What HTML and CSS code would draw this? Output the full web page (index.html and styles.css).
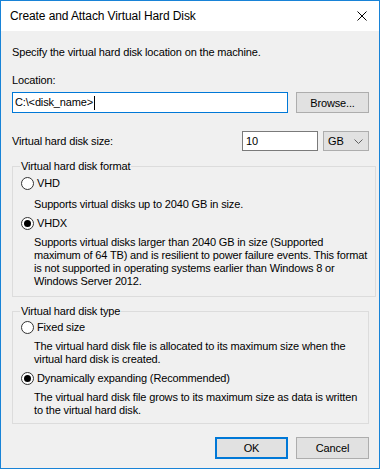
FILE: index.html
```html
<html>

<head>
  <title>Create and Attach Virtual Hard Disk</title>
  <link rel="stylesheet" href="styles.css">
</head>

<body>
  <div class="window">
    <div class="titlebar">
      <span class="title">Create and Attach Virtual Hard Disk</span>
      <svg class="close" width="10" height="10" viewBox="0 0 10 10">
        <path d="M0.5 0.5 L9.5 9.5 M9.5 0.5 L0.5 9.5" stroke="#000" stroke-width="1" fill="none" />
      </svg>
    </div>

    <div class="content">
      <p class="intro">Specify the virtual hard disk location on the machine.</p>

      <p class="field-label">Location:</p>
      <div class="location-row">
        <div class="textbox textbox-focus">C:\&lt;disk_name&gt;<span class="caret"></span></div>
        <div class="button browse">Browse...</div>
      </div>

      <div class="size-row">
        <span class="size-label">Virtual hard disk size:</span>
        <div class="textbox size-box">10</div>
        <div class="select">
          <span>GB</span>
          <svg width="9" height="5" viewBox="0 0 9 5">
            <path d="M0.5 0.5 L4.5 4.5 L8.5 0.5" stroke="#606060" stroke-width="1" fill="none" />
          </svg>
        </div>
      </div>

      <fieldset class="group group-format">
        <legend>Virtual hard disk format</legend>
        <div class="radio first">
          <span class="dot"></span>VHD
        </div>
        <p class="desc one">Supports virtual disks up to 2040 GB in size.</p>
        <div class="radio">
          <span class="dot checked"></span>VHDX
        </div>
        <p class="desc">Supports virtual disks larger than 2040 GB in size (Supported<br>
          maximum of 64 TB) and is resilient to power failure events. This format<br>
          is not supported in operating systems earlier than Windows 8 or<br>
          Windows Server 2012.</p>
      </fieldset>

      <fieldset class="group group-type">
        <legend>Virtual hard disk type</legend>
        <div class="radio first">
          <span class="dot"></span>Fixed size
        </div>
        <p class="desc">The virtual hard disk file is allocated to its maximum size when the<br>
          virtual hard disk is created.</p>
        <div class="radio">
          <span class="dot checked"></span>Dynamically expanding (Recommended)
        </div>
        <p class="desc">The virtual hard disk file grows to its maximum size as data is written<br>
          to the virtual hard disk.</p>
      </fieldset>

      <div class="actions">
        <div class="button default">OK</div>
        <div class="button">Cancel</div>
      </div>
    </div>
  </div>
</body>

</html>
```

FILE: styles.css
```css
body {
  margin: 0;
  font-family: 'Liberation Sans', Arial, sans-serif;
  font-size: 11px;
  letter-spacing: -0.15px;
  color: #000;
}

p {
  margin: 0;
}

.window {
  width: 380px;
  height: 469px;
  box-sizing: border-box;
  border: 1px solid #1883d7;
  background: #f0f0f0;
  overflow: hidden;
}

.titlebar {
  height: 30px;
  background: #fff;
  display: flex;
  align-items: center;
  justify-content: space-between;
  padding: 0 12px 0 9px;
}

.title {
  font-size: 12px;
  letter-spacing: -0.1px;
}

.content {
  padding: 13px 10px 0 11px;
}

.intro {
  line-height: 16px;
}

.field-label {
  line-height: 16px;
  margin-top: 12px;
}

.location-row {
  display: flex;
  gap: 8px;
  margin-top: 4px;
}

.textbox {
  box-sizing: border-box;
  height: 21px;
  line-height: 19px;
  background: #fff;
  border: 1px solid #7a7a7a;
  padding: 0 2px;
  display: flex;
  align-items: center;
}

.textbox-focus {
  width: 276px;
  border-color: #0078d7;
}

.caret {
  display: inline-block;
  width: 1px;
  height: 14px;
  background: #000;
  margin-left: 1px;
}

.button {
  box-sizing: border-box;
  height: 21px;
  background: #e1e1e1;
  border: 1px solid #adadad;
  display: flex;
  align-items: center;
  justify-content: center;
}

.browse {
  width: 73px;
}

.size-row {
  display: flex;
  align-items: center;
  margin-top: 18px;
  height: 20px;
}

.size-label {
  flex: 1;
}

.size-box {
  width: 76px;
  height: 20px;
  padding-left: 3px;
}

.select {
  box-sizing: border-box;
  width: 46px;
  height: 20px;
  margin-left: 5px;
  background: #e1e1e1;
  border: 1px solid #adadad;
  display: flex;
  align-items: center;
  justify-content: space-between;
  padding: 0 5px 0 4px;
}

.group {
  margin: 7px 0 0 0;
  border: 1px solid #dcdcdc;
  padding: 0 8px 8px 8px;
  width: 357px;
  box-sizing: border-box;
}

.group legend {
  padding: 0 1px;
  margin-left: -1px;
  line-height: 16px;
}

.group-type {
  margin-top: 6px;
  padding-bottom: 6px;
}

.radio {
  display: flex;
  align-items: center;
  line-height: 16px;
  margin-top: 4px;
}

.radio.first {
  margin-top: 1px;
}

.group-type .radio.first {
  margin-top: 0;
}

.dot {
  box-sizing: border-box;
  width: 13px;
  height: 13px;
  border: 1px solid #333;
  border-radius: 50%;
  background: #fff;
  margin-right: 3px;
  display: flex;
  align-items: center;
  justify-content: center;
}

.dot.checked::after {
  content: '';
  width: 7px;
  height: 7px;
  border-radius: 50%;
  background: #000;
}

.desc {
  line-height: 13px;
  margin: 5px 0 0 13px;
  white-space: nowrap;
}

.desc.one {
  margin-top: 7px;
}

.actions {
  display: flex;
  justify-content: flex-end;
  gap: 8px;
  margin-top: 13px;
}

.actions .button {
  width: 73px;
  height: 22px;
}

.actions .default {
  border: 2px solid #0078d7;
}
```
